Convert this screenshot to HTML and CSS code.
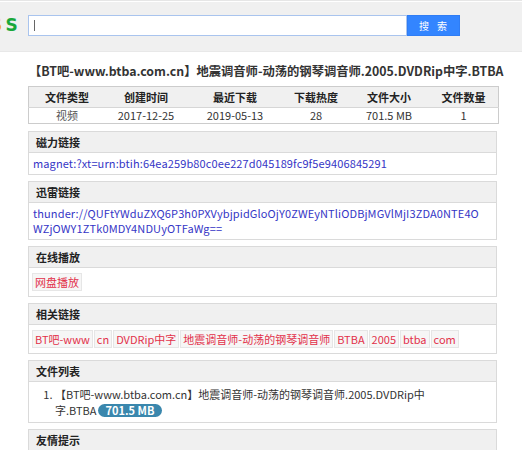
FILE: index.html
```html
<!DOCTYPE html>
<html lang="zh-CN">
<head>
<meta charset="utf-8">
<title>BTBA</title>
<link rel="stylesheet" href="styles.css">
</head>
<body>
<div class="top">
  <div class="bar">
    <div class="logo"><span class="lo">S</span><span class="lg">S</span></div>
    <div class="search">
      <div class="input"><span class="caret"></span></div>
      <button class="btn">搜 索</button>
    </div>
  </div>
</div>
<div class="main">
  <h1 class="title">【BT吧-www.btba.com.cn】地震调音师-动荡的钢琴调音师.2005.DVDRip中字.BTBA</h1>
  <table class="info">
    <thead>
      <tr><th class="c1">文件类型</th><th class="c2">创建时间</th><th class="c3">最近下载</th><th class="c4">下载热度</th><th class="c5">文件大小</th><th class="c6">文件数量</th></tr>
    </thead>
    <tbody>
      <tr><td class="muted">视频</td><td>2017-12-25</td><td>2019-05-13</td><td>28</td><td>701.5 MB</td><td>1</td></tr>
    </tbody>
  </table>

  <div class="panel">
    <div class="ph">磁力链接</div>
    <div class="pb linkbox"><a class="link" href="#">magnet:?xt=urn:btih:64ea259b80c0ee227d045189fc9f5e9406845291</a></div>
  </div>

  <div class="panel">
    <div class="ph">迅雷链接</div>
    <div class="pb linkbox"><a class="link" href="#">thunder://QUFtYWduZXQ6P3h0PXVybjpidGloOjY0ZWEyNTliODBjMGVlMjI3ZDA0NTE4OWZjOWY1ZTk0MDY4NDUyOTFaWg==</a></div>
  </div>

  <div class="panel">
    <div class="ph">在线播放</div>
    <div class="pb tags"><a class="tag" href="#">网盘播放</a></div>
  </div>

  <div class="panel">
    <div class="ph">相关链接</div>
    <div class="pb tags">
      <a class="tag" href="#">BT吧-www</a><a class="tag" href="#">cn</a><a class="tag" href="#">DVDRip中字</a><a class="tag" href="#">地震调音师-动荡的钢琴调音师</a><a class="tag" href="#">BTBA</a><a class="tag" href="#">2005</a><a class="tag" href="#">btba</a><a class="tag" href="#">com</a>
    </div>
  </div>

  <div class="panel">
    <div class="ph">文件列表</div>
    <div class="pb">
      <ol class="files">
        <li>【BT吧-www.btba.com.cn】地震调音师-动荡的钢琴调音师.2005.DVDRip中字.BTBA<span class="badge">701.5 MB</span></li>
      </ol>
    </div>
  </div>

  <div class="panel">
    <div class="ph">友情提示</div>
    <div class="pb">本站不存储任何资源文件，磁力链接由网友分享。</div>
  </div>
</div>
</body>
</html>
```
FILE: styles.css
```css
html, body {
  margin: 0;
  padding: 0;
  background: #fff;
}
body {
  font-family: "Noto Sans CJK SC", "Noto Sans", sans-serif;
  font-size: 11px;
  color: #333;
  overflow: hidden;
}
.top {
  border-top: 1px solid #e6e6e6;
  padding-top: 1px;
}
.bar {
  background: #f0f0f0;
  height: 50px;
  border-bottom: 1px solid #e8e8e8;
  display: flex;
  align-items: flex-start;
  padding-top: 13px;
  box-sizing: border-box;
}
.logo {
  margin-left: -10px;
  width: 29px;
  margin-right: 9px;
  font-family: "DejaVu Sans", sans-serif;
  font-weight: 700;
  font-size: 17px;
  line-height: 21px;
  white-space: nowrap;
  letter-spacing: 4px;
}
.lo { color: #f5a623; }
.lg { color: #1aa83b; }
.search {
  display: flex;
  height: 21px;
}
.input {
  width: 379px;
  height: 21px;
  box-sizing: border-box;
  border: 1px solid #a9c4ee;
  background: #fff;
  position: relative;
}
.caret {
  position: absolute;
  left: 5px;
  top: 4px;
  width: 1px;
  height: 11px;
  background: #666;
}
.btn {
  width: 53px;
  height: 21px;
  margin: 0;
  padding: 0 0 0 2px;
  border: 1px solid #2f7df5;
  background: #3385ff;
  color: #fff;
  font-family: "Noto Sans CJK SC", sans-serif;
  font-size: 10px;
  letter-spacing: 3px;
}
.main {
  width: 469px;
  margin-left: 28px;
}
.title {
  margin: 10px 0 6px 1px;
  font-size: 12.3px;
  line-height: 18px;
  font-weight: 700;
  color: #333;
  white-space: nowrap;
}
.info {
  width: 469px;
  border-collapse: collapse;
  border: 1px solid #ccc;
  table-layout: fixed;
}
.info th {
  background: #f0f0f0;
  font-weight: 700;
  color: #222;
  height: 20px;
  line-height: 20px;
  padding: 0;
  border-bottom: 1px solid #d6d6d6;
  text-align: center;
}
.info td {
  line-height: 15px;
  height: 15px;
  padding: 0;
  text-align: center;
  color: #333;
}
.info td.muted { color: #555; }
.c1 { width: 76px; }
.c2 { width: 82px; }
.c3 { width: 96px; }
.c4 { width: 66px; }
.c5 { width: 80px; }
.c6 { width: 69px; }
.panel {
  margin-top: 6px;
  border: 1px solid #dadada;
}
.info + .panel { margin-top: 7px; }
.ph {
  background: #f0f0f0;
  border-bottom: 1px solid #dadada;
  height: 20px;
  line-height: 20px;
  padding-left: 7px;
  font-weight: 700;
  color: #222;
}
.pb {
  padding: 3px 5px 3px 4px;
  line-height: 15px;
  word-break: break-all;
}
.linkbox {
  padding-right: 8px;
}
.link {
  color: #3535c6;
  text-decoration: none;
  letter-spacing: 0.12px;
}
.tags {
  display: flex;
  flex-wrap: wrap;
  gap: 1px;
  padding: 5px 4px 5px 3px;
}
.tag {
  display: block;
  height: 18px;
  box-sizing: border-box;
  line-height: 16px;
  padding: 0 2px;
  border: 1px solid #e6e6e6;
  background: #f6f6f6;
  color: #e2314a;
  text-decoration: none;
}
.files {
  margin: 1px 0 1px;
  padding: 0 60px 0 22px;
}
.files li {
  line-height: 16px;
  color: #333;
}
.badge {
  display: inline-block;
  background: #3a87ad;
  color: #fff;
  font-weight: 700;
  font-size: 11px;
  line-height: 13px;
  padding: 0 8px;
  border-radius: 7px;
  margin-left: 1px;
  vertical-align: 0;
}
```
